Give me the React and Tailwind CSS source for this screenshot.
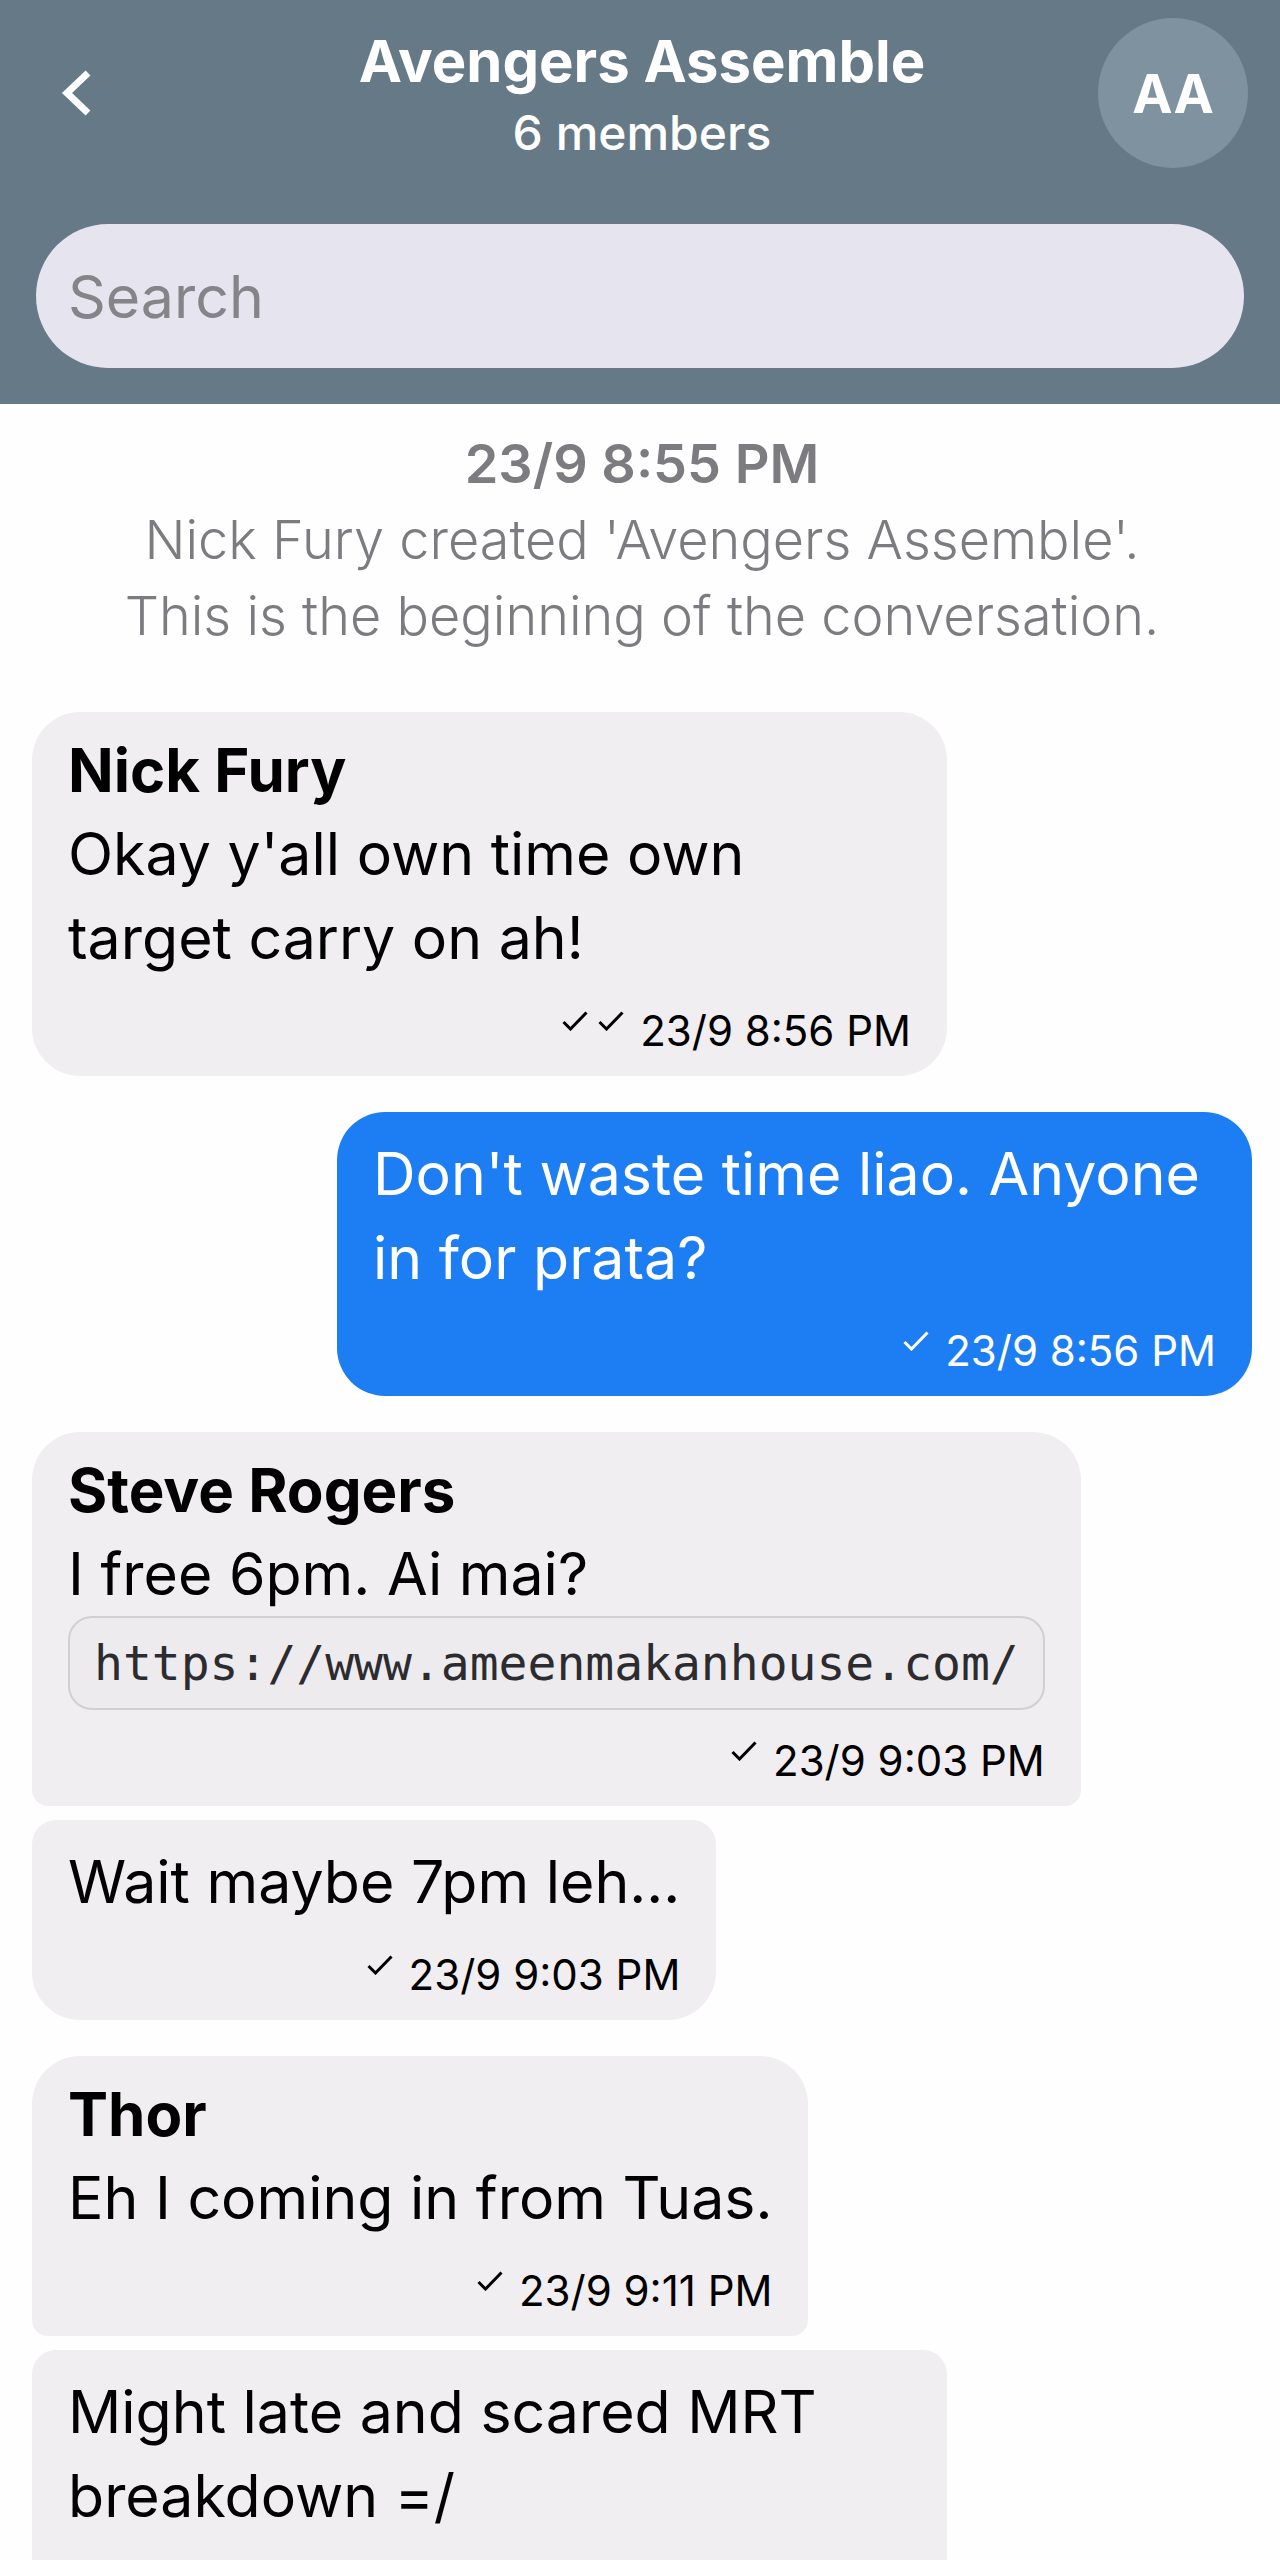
import React from "react";

function Check() {
  return (
    <svg width="26" height="20" viewBox="0 0 26 20" fill="none" stroke="currentColor" strokeWidth="3" aria-hidden="true">
      <path d="M1.5 11 8.5 18 24.5 1.5" />
    </svg>
  );
}

const tones = {
  received: "self-start bg-[#f1eef2] text-black",
  sent: "self-end bg-[#1d7ef4] text-white",
};

const shapes = {
  single: "mt-9 rounded-[48px]",
  first: "mt-9 rounded-t-[48px] rounded-b-[16px]",
  last: "mt-3.5 rounded-t-[24px] rounded-b-[48px]",
};

function Message({ name, tone = "received", shape = "single", checks = 1, time, link, children }) {
  return (
    <article
      className={`flex flex-col px-9 pb-[18px] ${name ? "pt-4" : "pt-5"} ${link ? "max-w-full" : "max-w-3/4"} ${tones[tone]} ${shapes[shape]}`}
    >
      {name && <h2 className="text-[60px] leading-[84px] font-bold">{name}</h2>}
      <p className="text-[59px] leading-[84px]">{children}</p>
      {link && (
        <a
          href={link}
          className="rounded-[24px] border-2 border-[#d0cfd1] bg-[#edebee] px-6 text-[48px] leading-[90px] text-[#2c2c30] [font-family:'DejaVu_Sans_Mono',monospace]"
        >
          {link}
        </a>
      )}
      <footer className="mt-6 flex min-h-[54px] items-center justify-end text-[42px] leading-[54px]">
        {time && (
          <>
            <span className="mr-4 mb-5 flex gap-2.5">
              {Array.from({ length: checks }, (_, i) => (
                <Check key={i} />
              ))}
            </span>
            <time>{time}</time>
          </>
        )}
      </footer>
    </article>
  );
}

export default function App() {
  return (
    <div className="h-screen overflow-hidden bg-[#fefefe] [font-family:Inter,sans-serif]">
      <header className="bg-[#667987] px-9 pt-[18px] pb-9">
        <div className="-mr-1 grid grid-cols-[150px_1fr_150px] items-center">
          <button type="button" aria-label="Back" className="flex h-[150px] items-center pl-6 text-white">
            <svg width="34" height="48" viewBox="0 0 34 48" fill="none" stroke="currentColor" strokeWidth="7" aria-hidden="true">
              <path d="M28 4 7 24 28 44" />
            </svg>
          </button>
          <div className="pt-1 text-center text-white">
            <h1 className="text-[58px] leading-[76px] font-bold">Avengers Assemble</h1>
            <p className="text-[48px] leading-[68px] font-medium">6 members</p>
          </div>
          <div className="flex size-[150px] items-center justify-center rounded-full bg-[#7f929f] text-[54px] font-bold text-white">
            AA
          </div>
        </div>
        <input
          type="search"
          aria-label="Search"
          placeholder="Search"
          className="mt-14 block h-36 w-full rounded-full bg-[#e5e4ef] px-8 text-[59px] text-black outline-none placeholder:text-[#858488]"
        />
      </header>

      <main className="flex flex-col pr-7 pl-8">
        <div className="mt-[22px] mb-[22px] text-center text-[54px] leading-[76px] text-[#7c7c80]">
          <p className="font-semibold">23/9 8:55 PM</p>
          <p className="font-light">Nick Fury created 'Avengers Assemble'.</p>
          <p className="font-light">This is the beginning of the conversation.</p>
        </div>
        <div className="flex flex-col">
          <Message name="Nick Fury" checks={2} time="23/9 8:56 PM">
            Okay y'all own time own target carry on ah!
          </Message>
          <Message tone="sent" time="23/9 8:56 PM">
            Don't waste time liao. Anyone in for prata?
          </Message>
          <Message name="Steve Rogers" shape="first" time="23/9 9:03 PM" link="https://www.ameenmakanhouse.com/">
            I free 6pm. Ai mai?
          </Message>
          <Message shape="last" time="23/9 9:03 PM">
            Wait maybe 7pm leh...
          </Message>
          <Message name="Thor" shape="first" time="23/9 9:11 PM">
            Eh I coming in from Tuas.
          </Message>
          <Message shape="last">Might late and scared MRT breakdown =/</Message>
        </div>
      </main>
    </div>
  );
}
